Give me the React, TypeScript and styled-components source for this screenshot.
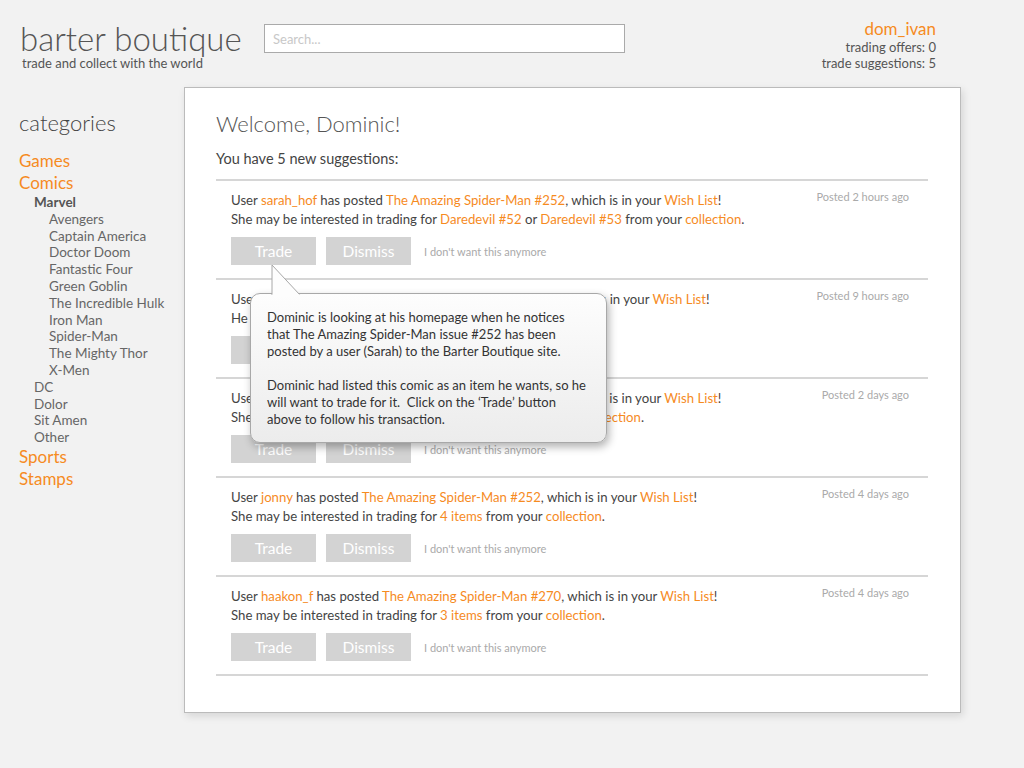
import React from 'react';
import styled, { createGlobalStyle } from 'styled-components';

const GlobalStyle = createGlobalStyle`
  html, body {
    margin: 0;
    padding: 0;
    background: #f2f2f2;
    font-family: Lato, 'Open Sans', sans-serif;
    color: #444;
  }
`;

const ORANGE = '#f68b1f';

const Page = styled.div`
  width: 1024px;
  min-height: 768px;
  box-sizing: border-box;
  padding: 0 0 56px 0;
`;

const Header = styled.header`
  display: flex;
  align-items: flex-start;
  height: 87px;
  box-sizing: border-box;
  padding: 18px 88px 0 20px;
`;

const Brand = styled.div`
  display: flex;
  flex-direction: column;
  width: 244px;
`;

const Logo = styled.div`
  font-size: 33px;
  font-weight: 300;
  line-height: 40px;
  color: #555;
`;

const Tagline = styled.div`
  font-size: 13px;
  color: #555;
  margin: -3px 0 0 2px;
`;

const Search = styled.input`
  width: 361px;
  height: 29px;
  box-sizing: border-box;
  margin-top: 6px;
  border: 1px solid #aaa;
  background: #fff;
  padding: 0 8px;
  font-family: inherit;
  font-size: 13px;
  color: #555;
  outline: none;
  &::placeholder {
    color: #c8c8c8;
  }
`;

const UserBox = styled.div`
  margin-left: auto;
  text-align: right;
  font-size: 13px;
  line-height: 16px;
  color: #555;
`;

const UserName = styled.div`
  color: ${ORANGE};
  font-size: 17px;
  line-height: 21px;
`;

const Body = styled.div`
  display: flex;
  align-items: flex-start;
`;

const Sidebar = styled.nav`
  width: 184px;
  box-sizing: border-box;
  padding: 22px 0 0 19px;
`;

const SideTitle = styled.div`
  font-size: 22px;
  font-weight: 300;
  color: #444;
  margin-bottom: 14px;
`;

const CatLink = styled.div`
  font-size: 17px;
  line-height: 22px;
  color: ${ORANGE};
`;

const SubCat = styled.div<{ $level: number; $bold?: boolean }>`
  font-size: 13.5px;
  line-height: 16.8px;
  color: ${(p) => (p.$bold ? '#555' : '#666')};
  font-weight: ${(p) => (p.$bold ? 700 : 400)};
  padding-left: ${(p) => p.$level * 15}px;
`;

const Panel = styled.main`
  position: relative;
  width: 777px;
  min-height: 625px;
  box-sizing: border-box;
  background: #fff;
  border: 1px solid #bbb;
  box-shadow: 2px 3px 8px rgba(0, 0, 0, 0.12);
  padding: 22px 32px 36px 31px;
`;

const Welcome = styled.h1`
  margin: 0;
  font-weight: 300;
  font-size: 22px;
  line-height: 28px;
  color: #555;
`;

const Intro = styled.p`
  margin: 12px 0 12px;
  font-size: 14.5px;
  color: #444;
`;

const List = styled.div`
  border-top: 2px solid #d6d6d6;
`;

const Item = styled.div`
  position: relative;
  height: 99px;
  box-sizing: border-box;
  border-bottom: 2px solid #d6d6d6;
  padding: 10px 19px 0 15px;
`;

const ItemTop = styled.div`
  display: flex;
  justify-content: space-between;
`;

const ItemText = styled.div`
  font-size: 13.2px;
  line-height: 19px;
  color: #444;
`;

const Time = styled.div`
  font-size: 11px;
  color: #aaa;
  margin-top: -1px;
`;

const Link = styled.span`
  color: ${ORANGE};
`;

const Actions = styled.div`
  display: flex;
  align-items: center;
  gap: 10px;
  margin-top: 8px;
`;

const Button = styled.button`
  width: 85px;
  height: 28px;
  border: none;
  background: #d3d3d3;
  color: #fff;
  font-family: inherit;
  font-size: 15.5px;
  padding: 0;
`;

const Ignore = styled.span`
  font-size: 11px;
  color: #aaa;
  margin-left: 3px;
`;

const Tooltip = styled.div`
  position: absolute;
  left: 65px;
  top: 205px;
  width: 357px;
  height: 150px;
  box-sizing: border-box;
  padding: 15px 16px;
  border: 1px solid #a8a8a8;
  border-radius: 10px;
  background: linear-gradient(#fdfdfd, #ececec);
  box-shadow: 2px 4px 8px rgba(0, 0, 0, 0.3);
  font-size: 13px;
  line-height: 17px;
  color: #333;
  z-index: 2;
`;

const Pointer = styled.svg`
  position: absolute;
  left: 21px;
  top: -29px;
  overflow: visible;
`;

const Para = styled.p`
  margin: 0 0 17px;
  &:last-child {
    margin: 0;
  }
`;

type Suggestion = {
  user: string;
  item: string;
  time: string;
  wants: React.ReactNode;
};

const items: Suggestion[] = [
  {
    user: 'sarah_hof',
    item: 'The Amazing Spider-Man #252',
    time: 'Posted 2 hours ago',
    wants: (
      <>
        She may be interested in trading for <Link>Daredevil #52</Link> or <Link>Daredevil #53</Link> from your{' '}
        <Link>collection</Link>.
      </>
    ),
  },
  {
    user: 'peter_p',
    item: 'The Amazing Spider-Man #252',
    time: 'Posted 9 hours ago',
    wants: (
      <>
        He may be interested in trading for <Link>2 items</Link> from your <Link>collection</Link>.
      </>
    ),
  },
  {
    user: 'mjwatson',
    item: 'The Amazing Spider-Man #252',
    time: 'Posted 2 days ago',
    wants: (
      <>
        She may be interested in trading for <Link>Daredevil #52</Link> from your <Link>collection</Link>.
      </>
    ),
  },
  {
    user: 'jonny',
    item: 'The Amazing Spider-Man #252',
    time: 'Posted 4 days ago',
    wants: (
      <>
        She may be interested in trading for <Link>4 items</Link> from your <Link>collection</Link>.
      </>
    ),
  },
  {
    user: 'haakon_f',
    item: 'The Amazing Spider-Man #270',
    time: 'Posted 4 days ago',
    wants: (
      <>
        She may be interested in trading for <Link>3 items</Link> from your <Link>collection</Link>.
      </>
    ),
  },
];

const marvel = [
  'Avengers',
  'Captain America',
  'Doctor Doom',
  'Fantastic Four',
  'Green Goblin',
  'The Incredible Hulk',
  'Iron Man',
  'Spider-Man',
  'The Mighty Thor',
  'X-Men',
];

export default function App() {
  return (
    <Page>
      <GlobalStyle />
      <Header>
        <Brand>
          <Logo>barter boutique</Logo>
          <Tagline>trade and collect with the world</Tagline>
        </Brand>
        <Search placeholder="Search..." />
        <UserBox>
          <UserName>dom_ivan</UserName>
          <div>trading offers: 0</div>
          <div>trade suggestions: 5</div>
        </UserBox>
      </Header>
      <Body>
        <Sidebar>
          <SideTitle>categories</SideTitle>
          <CatLink>Games</CatLink>
          <CatLink>Comics</CatLink>
          <SubCat $level={1} $bold>
            Marvel
          </SubCat>
          {marvel.map((m) => (
            <SubCat key={m} $level={2}>
              {m}
            </SubCat>
          ))}
          {['DC', 'Dolor', 'Sit Amen', 'Other'].map((m) => (
            <SubCat key={m} $level={1}>
              {m}
            </SubCat>
          ))}
          <CatLink>Sports</CatLink>
          <CatLink>Stamps</CatLink>
        </Sidebar>
        <Panel>
          <Welcome>Welcome, Dominic!</Welcome>
          <Intro>You have 5 new suggestions:</Intro>
          <List>
            {items.map((s) => (
              <Item key={s.time + s.user}>
                <ItemTop>
                  <ItemText>
                    User <Link>{s.user}</Link> has posted <Link>{s.item}</Link>, which is in your{' '}
                    <Link>Wish List</Link>!
                    <br />
                    {s.wants}
                  </ItemText>
                  <Time>{s.time}</Time>
                </ItemTop>
                <Actions>
                  <Button>Trade</Button>
                  <Button>Dismiss</Button>
                  <Ignore>I don't want this anymore</Ignore>
                </Actions>
              </Item>
            ))}
          </List>
          <Tooltip>
            <Pointer width="30" height="30" viewBox="0 0 30 30">
              <path d="M0 30 L0 0 L28 30" fill="#fdfdfd" stroke="#a8a8a8" strokeWidth="1" />
              <rect x="0.6" y="29" width="27" height="3" fill="#fdfdfd" />
            </Pointer>
            <Para>
              Dominic is looking at his homepage when he notices that The Amazing Spider-Man issue #252 has been
              posted by a user (Sarah) to the Barter Boutique site.
            </Para>
            <Para>
              Dominic had listed this comic as an item he wants, so he will want to trade for it.&nbsp; Click on the
              ‘Trade’ button above to follow his transaction.
            </Para>
          </Tooltip>
        </Panel>
      </Body>
    </Page>
  );
}
